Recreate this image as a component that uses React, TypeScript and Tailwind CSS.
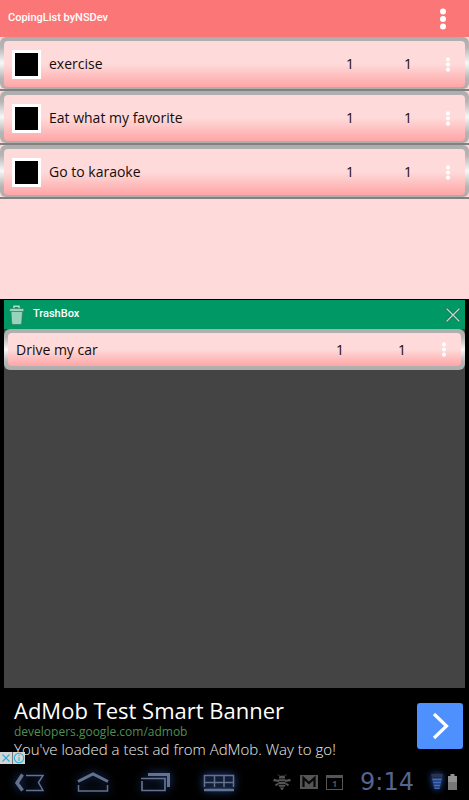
import React, { type FC } from 'react'
import clsx from 'clsx'

interface ICoping {
  name: string
  planned: number
  done: number
}

const copings: ICoping[] = [
  { name: 'exercise', planned: 1, done: 1 },
  { name: 'Eat what my favorite', planned: 1, done: 1 },
  { name: 'Go to karaoke', planned: 1, done: 1 },
]

const trashed: ICoping[] = [{ name: 'Drive my car', planned: 1, done: 1 }]

const MoreIcon: FC<{ className?: string }> = ({ className }) => (
  <svg viewBox="0 0 8 22" fill="currentColor" className={className}>
    <circle cx="4" cy="3.5" r="3" />
    <circle cx="4" cy="11" r="3" />
    <circle cx="4" cy="18.5" r="3" />
  </svg>
)

const CopingRow: FC<{ coping: ICoping; isTrashed?: boolean }> = ({
  coping,
  isTrashed = false,
}) => {
  return (
    <li className={clsx(isTrashed ? 'h-[41px]' : 'h-[54px] border-b-2 border-[#858080]')}>
      <div
        className={clsx(
          'h-full rounded-md bg-[linear-gradient(#adadad,#b5b5b5_20%,#f8f8f8_50%,#b5b5b5_80%,#adadad)] px-1 pt-1',
          isTrashed ? 'pb-1' : 'pb-0.5'
        )}
      >
        <div className="flex h-full items-center rounded bg-[linear-gradient(#fedada_50%,#ffa5a5)] pr-[14px] pl-2 text-sm text-[#140c0c]">
          {isTrashed ? (
            <span className="min-w-0 flex-1 truncate">{coping.name}</span>
          ) : (
            <label className="flex min-w-0 flex-1 items-center gap-2">
              <input
                type="checkbox"
                className="size-[29px] shrink-0 appearance-none border-3 border-white bg-black checked:bg-[#009966]"
              />
              <span className="truncate">{coping.name}</span>
            </label>
          )}
          <span className={clsx('text-center', isTrashed ? 'w-[62px]' : 'w-[58px]')}>
            {coping.planned}
          </span>
          <span className={clsx('text-center', isTrashed ? 'w-[62px]' : 'w-[58px]')}>
            {coping.done}
          </span>
          <button
            type="button"
            aria-label={`Options for ${coping.name}`}
            className="flex w-[14px] justify-end text-white"
          >
            <MoreIcon className="h-[15px] w-[6px]" />
          </button>
        </div>
      </div>
    </li>
  )
}

const TrashBox: FC = () => (
  <section className="flex flex-1 flex-col bg-black px-1 pt-px">
    <header className="flex h-[29px] items-center bg-[#009966] px-1 text-[11px] text-white">
      <svg viewBox="0 0 18 20" className="h-5 w-[18px]">
        <path d="M6 3.5V1.2h5v2.3" fill="none" stroke="#a8dfc9" strokeWidth="1.5" />
        <path d="M3 6.500h11.500L13.700 18q0 1.500-1.500 1.500h-7q-1.500 0-1.500-1.500z" fill="#98d3bd" stroke="#2d7a5c" strokeWidth=".6" />
        <path d="M2.500 3.500h12.500q.8 0 .8 1v2H1.700v-2q0-1 .8-1z" fill="#9ad6be" stroke="#2d7a5c" strokeWidth=".6" />
      </svg>
      <h2 className="ml-[7px] flex-1 font-['Roboto',sans-serif] font-medium">TrashBox</h2>
      <button type="button" aria-label="Close trash box">
        <svg viewBox="0 0 16 16" className="size-4" strokeLinecap="round">
          <path d="M2 2l12 12M14 2L2 14" stroke="#286d52" strokeWidth="2.6" />
          <path d="M2 2l12 12M14 2L2 14" stroke="#b5e1d2" strokeWidth="1.2" />
        </svg>
      </button>
    </header>
    <ul className="flex-1 bg-[#444444]">
      {trashed.map((coping) => (
        <CopingRow key={coping.name} coping={coping} isTrashed />
      ))}
    </ul>
  </section>
)

const AdBanner: FC = () => (
  <aside className="relative flex h-[76px] items-center justify-between bg-black pr-[6px] pl-[14px]">
    <div className="flex flex-col pt-px whitespace-nowrap">
      <strong className="text-[22px] leading-[28px] font-normal text-white">
        AdMob Test Smart Banner
      </strong>
      <a
        href="https://developers.google.com/admob"
        className="text-[12px] leading-4 text-[#4f8f52]"
      >
        developers.google.com/admob
      </a>
      <span className="text-[15px] leading-[18px] font-light text-[#eeeeee]">
        You've loaded a test ad from AdMob. Way to go!
      </span>
    </div>
    <button
      type="button"
      aria-label="Open ad"
      className="flex size-[46px] items-center justify-center rounded-[3px] bg-[#4d90fe]"
    >
      <svg viewBox="0 0 46 46" className="size-full" fill="none" stroke="#fff" strokeWidth="3.2">
        <path d="M17 11l12.500 12L17 35" />
      </svg>
    </button>
    <div className="absolute bottom-0 left-0 flex bg-[#d5d5d5]">
      <button type="button" aria-label="Dismiss ad">
        <svg viewBox="0 0 12 12" className="size-3" stroke="#26b3d9" strokeWidth="1.1">
          <path d="M2.500 2.500l7 7M9.500 2.500l-7 7" />
        </svg>
      </button>
      <button type="button" aria-label="About this ad" className="border-l border-[#777777]">
        <svg viewBox="0 0 12 12" className="size-3" fill="none" stroke="#26b3d9" strokeWidth="1.1">
          <circle cx="6" cy="6" r="4.7" />
          <path d="M6 5v4M6 2.800v1.100" />
        </svg>
      </button>
    </div>
  </aside>
)

const navButton = 'drop-shadow-[0_0_4px_#23468a]'

const SystemBar: FC = () => (
  <nav className="flex h-9 items-center justify-between bg-black pr-3 pl-[14px]">
    <div className="flex items-center gap-8">
      <button type="button" aria-label="Back" className={navButton}>
        <svg viewBox="0 0 31 20" className="h-5 w-[31px]" fill="none" stroke="#64718f">
          <path d="M8.500 2.500L3 11l5.500 7.500" strokeWidth="3.4" />
          <path d="M12 3.500h17L24.500 10.500l4.500 8H12" strokeWidth="1.5" />
        </svg>
      </button>
      <button type="button" aria-label="Home" className={navButton}>
        <svg viewBox="0 0 32 20" className="h-5 w-8" fill="none" stroke="#64718f">
          <path d="M1 9.500L16 2l15 7.500" strokeWidth="3" />
          <path d="M1.500 13v6h29v-6" strokeWidth="1.5" />
        </svg>
      </button>
      <button type="button" aria-label="Recent apps" className={navButton}>
        <svg viewBox="0 0 30 20" className="h-5 w-[30px]" fill="none" stroke="#64718f">
          <path d="M7 2.500h20.500V15" strokeWidth="3" />
          <path d="M0 6.500h24v12H1V9" strokeWidth="1.7" />
        </svg>
      </button>
      <button type="button" aria-label="Menu" className={navButton}>
        <svg viewBox="0 0 32 20" className="h-5 w-8" fill="none" stroke="#64718f">
          <path d="M1 3.500h30v12H1z" fill="#111d35" stroke="none" />
          <path d="M1.500 15V3.500h29V15M1.500 10.500h29M11.500 3.500V15M21 3.500V15" strokeWidth="1.5" />
          <path d="M1 18h30" strokeWidth="2.5" />
        </svg>
      </button>
    </div>
    <div className="flex items-center gap-2 text-[#555555]">
      <svg viewBox="0 0 20 18" className="h-[18px] w-5" fill="currentColor">
        <path d="M7 4.500Q7 2.500 10 2.500t3 2v1H7z" />
        <path d="M6 1.500l2 2M14 1.500l-2 2" stroke="currentColor" />
        <path d="M7 7L2 5.800Q.8 7 1.500 8.200L7 9zM13 7l5-1.200q1.200 1.200.5 2.400L13 9zM6 9.800L3 11.500q0 1.400 1.500 1.500L7 11zM14 9.800l3 1.700q0 1.400-1.500 1.500L13 11z" />
        <path d="M6.500 6.300h7v2h-7zM6.500 9h7v2h-7zM6.500 11.700h7l-.6 2H7.100zM7.700 14.400h4.600L10 17.500z" />
      </svg>
      <svg viewBox="0 0 18 14" className="h-[14px] w-[18px]">
        <path d="M0 0h18v14H0z" fill="currentColor" />
        <path d="M3.500 12V3L9 8l5.500-5v9" fill="none" stroke="#080808" strokeWidth="2.2" />
      </svg>
      <div className="flex h-[15px] w-[17px] items-center justify-center border border-t-3 border-[#555555] text-[9px] leading-[9px] font-bold">
        1
      </div>
      <time className="w-[72px] text-center font-['DejaVu_Sans',sans-serif] text-[24px] leading-6 text-[#536591]">
        9:14
      </time>
      <div className="flex items-center gap-[5px]">
        <svg viewBox="0 0 12 16" className="h-4 w-3 drop-shadow-[0_0_3px_#2455b8]">
          <path d="M0 0h12l-1 4H1z" fill="#29344f" />
          <path d="M1 4h10L8.500 15h-5z" fill="#426cc0" />
          <path d="M1 4h10M1.500 7h9M2 10h8M3 13h6" stroke="#152448" />
        </svg>
        <svg viewBox="0 0 9 16" className="h-4 w-[9px]">
          <path d="M2.500 0h4v2H9v14H0V2h2.500z" fill="#929292" />
          <path d="M0 8h9v8H0z" fill="#777" />
        </svg>
      </div>
    </div>
  </nav>
)

export default function App() {
  return (
    <div className="flex min-h-screen flex-col bg-black font-['Open_Sans',sans-serif]">
      <header className="flex h-[37px] items-center justify-between bg-[#fb7777] pr-[22px] pl-2 text-white">
        <h1 className="font-['Roboto',sans-serif] text-[11px] font-medium">CopingList byNSDev</h1>
        <button type="button" aria-label="More options">
          <MoreIcon className="h-[22px] w-2" />
        </button>
      </header>
      <main className="flex flex-1 flex-col">
        <ul className="min-h-[262px] bg-[#fedada]">
          {copings.map((coping) => (
            <CopingRow key={coping.name} coping={coping} />
          ))}
        </ul>
        <TrashBox />
      </main>
      <AdBanner />
      <SystemBar />
    </div>
  )
}
